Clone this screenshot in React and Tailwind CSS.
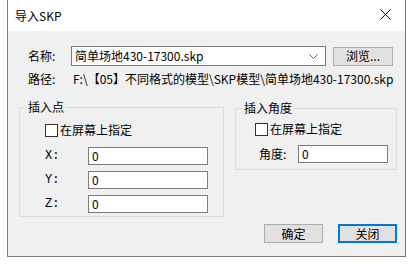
import React from 'react';

const font = { fontFamily: '"Noto Sans CJK SC", "Noto Sans", sans-serif' };

const Checkbox = ({ label, className = '' }) => (
  <label className={`flex items-center h-[16px] ${className}`}>
    <span className="w-[13px] h-[13px] border border-[#333333] bg-white mr-[2px]" />
    <span className="text-[12px] leading-[16px]">{label}</span>
  </label>
);

const Field = ({ value, className = '' }) => (
  <div className={`h-[18px] border border-[#7a7a7a] bg-white pl-[3px] text-[12px] leading-[16px] ${className}`}>
    {value}
  </div>
);

const GroupBox = ({ title, className = '', children }) => (
  <div className={`relative border border-[#dcdcdc] ${className}`}>
    <span className="absolute -top-[9px] left-[6px] px-[2px] bg-[#f0f0f0] text-[12px] leading-[16px]">{title}</span>
    {children}
  </div>
);

const AxisRow = ({ axis }) => (
  <div className="flex items-center h-[18px]">
    <span className="w-[43px] ml-[25px] text-[12px] text-black font-mono">{axis}:</span>
    <Field value="0" className="w-[120px]" />
  </div>
);

export default function App() {
  return (
    <div className="w-[414px] h-[264px] bg-white text-black" style={font}>
      <div className="ml-[7px] w-[399px] h-[257px] flex flex-col border-x border-b border-[#7a7a7a]">
        <div className="h-[31px] bg-white flex items-center justify-between pl-[7px] pr-[14px]">
          <span className="text-[12px]">导入SKP</span>
          <svg width="11" height="11" viewBox="0 0 11 11" className="mb-[2px]">
            <path d="M0.5 0.5 L10.5 10.5 M10.5 0.5 L0.5 10.5" stroke="#000" strokeWidth="1" />
          </svg>
        </div>

        <div className="flex-1 bg-[#f0f0f0] flex flex-col">
          <div className="flex items-center mt-[15px] h-[20px]">
            <span className="ml-[20px] w-[43px] text-[12px]">名称:</span>
            <div className="w-[255px] h-[20px] border border-[#7a7a7a] bg-white flex items-center justify-between">
              <span className="pl-[3px] text-[12px] leading-[16px]">简单场地430-17300.skp</span>
              <svg width="9" height="5" viewBox="0 0 9 5" className="mr-[7px]">
                <path d="M0.5 0.5 L4.5 4.5 L8.5 0.5" stroke="#606060" fill="none" />
              </svg>
            </div>
            <button className="ml-[7px] w-[60px] h-[19px] bg-[#e1e1e1] border border-[#adadad] text-[12px] leading-[16px]">
              浏览...
            </button>
          </div>

          <div className="flex items-center mt-[5px] h-[16px] text-[12px]">
            <span className="ml-[20px] w-[45px]">路径:</span>
            <span className="whitespace-nowrap">F:\【05】不同格式的模型\SKP模型\简单场地430-17300.skp</span>
          </div>

          <div className="flex items-start mt-[20px]">
            <GroupBox title="插入点" className="ml-[11px] w-[205px] h-[110px] pt-[14px]">
              <Checkbox label="在屏幕上指定" className="ml-[25px]" />
              <div className="flex flex-col gap-[6px] mt-[9px]">
                <AxisRow axis="X" />
                <AxisRow axis="Y" />
                <AxisRow axis="Z" />
              </div>
            </GroupBox>

            <GroupBox title="插入角度" className="ml-[11px] mt-[1px] w-[162px] h-[62px] pt-[12px]">
              <Checkbox label="在屏幕上指定" className="ml-[19px]" />
              <div className="flex items-center mt-[8px] h-[18px]">
                <span className="ml-[23px] w-[39px] text-[12px]">角度:</span>
                <Field value="0" className="w-[90px]" />
              </div>
            </GroupBox>
          </div>

          <div className="flex justify-end gap-[15px] mt-[7px] mr-[8px]">
            <button className="w-[59px] h-[19px] bg-[#e1e1e1] border border-[#adadad] text-[12px] leading-[16px]">确定</button>
            <button className="w-[59px] h-[19px] bg-[#e1e1e1] border-2 border-[#0078d7] text-[12px] leading-[15px]">关闭</button>
          </div>
        </div>
      </div>
    </div>
  );
}
